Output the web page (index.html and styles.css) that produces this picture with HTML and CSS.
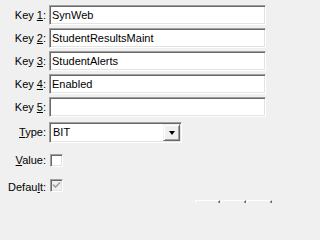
FILE: index.html
```html
<!DOCTYPE html>
<html>
<head>
<meta charset="utf-8">
<link rel="stylesheet" href="styles.css">
</head>
<body>
<div class="form">
  <label class="lbl">Key <u>1</u>:</label>
  <div class="field">SynWeb</div>
  <label class="lbl">Key <u>2</u>:</label>
  <div class="field">StudentResultsMaint</div>
  <label class="lbl">Key <u>3</u>:</label>
  <div class="field">StudentAlerts</div>
  <label class="lbl">Key <u>4</u>:</label>
  <div class="field">Enabled</div>
  <label class="lbl">Key <u>5</u>:</label>
  <div class="field"></div>
  <label class="lbl combo-lbl"><u>T</u>ype:</label>
  <div class="combo">
    <span class="combo-text">BIT</span>
    <span class="combo-btn"><span class="arrow"></span></span>
  </div>
  <label class="lbl chk-lbl value-row"><u>V</u>alue:</label>
  <div class="chk-cell value-row"><span class="chk"></span></div>
  <label class="lbl chk-lbl default-row">Defau<u>l</u>t:</label>
  <div class="chk-cell default-row">
    <span class="chk disabled">
      <svg width="11" height="11" viewBox="0 0 11 11"><path d="M2 4.5 L4.5 7 L9 2.5" fill="none" stroke="#a0a0a0" stroke-width="1.6"/></svg>
    </span>
  </div>
</div>
<div class="buttons">
  <span class="btn"></span>
  <span class="btn"></span>
  <span class="btn"></span>
</div>
</body>
</html>
```
FILE: styles.css
```css
html, body {
  margin: 0;
  padding: 0;
  background: #f0f0f0;
  overflow: hidden;
  width: 274px;
  height: 203px;
}
body {
  font-family: "Liberation Sans", Arial, sans-serif;
  font-size: 11px;
  color: #000;
}
.form {
  display: grid;
  grid-template-columns: 46px 1fr;
  column-gap: 3px;
  row-gap: 3px;
  padding: 5px 8px 0 0;
}
.lbl {
  text-align: right;
  line-height: 20px;
  height: 20px;
  white-space: nowrap;
}
.field {
  box-sizing: border-box;
  height: 20px;
  background: #fff;
  border: 1px solid;
  border-color: #a0a0a0 #ffffff #ffffff #a0a0a0;
  box-shadow: inset 1px 1px 0 #696969, inset -1px -1px 0 #e3e3e3;
  padding: 0 0 0 2px;
  line-height: 18px;
  white-space: nowrap;
  overflow: hidden;
}
.combo-lbl {
  margin-top: 2px;
  line-height: 21px;
  height: 21px;
}
.combo {
  margin-top: 2px;
  box-sizing: border-box;
  width: 133px;
  height: 21px;
  background: #fff;
  border: 1px solid;
  border-color: #a0a0a0 #ffffff #ffffff #a0a0a0;
  box-shadow: inset 1px 1px 0 #696969, inset -1px -1px 0 #e3e3e3;
  display: flex;
  align-items: stretch;
  padding: 1px;
}
.combo-text {
  flex: 1;
  padding-left: 2px;
  line-height: 17px;
}
.combo-btn {
  box-sizing: border-box;
  width: 17px;
  background: #f0f0f0;
  border: 1px solid;
  border-color: #f0f0f0 #696969 #696969 #f0f0f0;
  box-shadow: inset 1px 1px 0 #ffffff, inset -1px -1px 0 #a0a0a0;
  display: flex;
  align-items: center;
  justify-content: center;
}
.arrow {
  width: 0;
  height: 0;
  border-left: 3.5px solid transparent;
  border-right: 3.5px solid transparent;
  border-top: 4px solid #000;
  margin-top: 1px;
}
.chk-lbl {
  height: 13px;
  line-height: 13px;
}
.value-row {
  margin-top: 8px;
}
.default-row {
  margin-top: 9px;
}
.lbl.default-row {
  line-height: 16px;
}
.chk-cell {
  height: 13px;
  display: flex;
  padding-left: 1px;
}
.chk {
  box-sizing: border-box;
  width: 13px;
  height: 13px;
  background: #fff;
  border: 1px solid;
  border-color: #a0a0a0 #ffffff #ffffff #a0a0a0;
  box-shadow: inset 1px 1px 0 #696969, inset -1px -1px 0 #e3e3e3;
  display: flex;
  align-items: center;
  justify-content: center;
}
.chk.disabled {
  background: #f0f0f0;
}
.chk svg {
  display: block;
}
.buttons {
  display: flex;
  justify-content: flex-end;
  gap: 1px;
  padding-right: 2px;
  margin-top: 8px;
}
.btn {
  box-sizing: border-box;
  width: 25px;
  height: 23px;
  background: #f0f0f0;
  border: 1px solid;
  border-color: #ffffff #696969 #696969 #ffffff;
  box-shadow: inset -1px -1px 0 #a0a0a0;
}
```
